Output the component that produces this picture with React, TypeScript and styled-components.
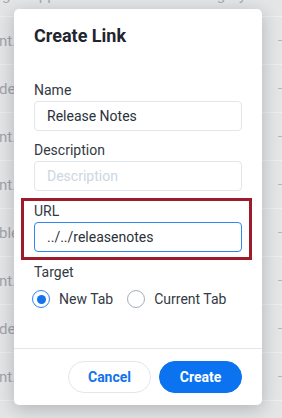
import React from "react";
import styled, { createGlobalStyle } from "styled-components";

const Global = createGlobalStyle`
  html, body { margin: 0; padding: 0; }
  body {
    width: 282px;
    height: 418px;
    overflow: hidden;
    background: #e3e5e7;
    font-family: Roboto, "Noto Sans", Arial, sans-serif;
  }
`;

const Page = styled.div`
  position: relative;
  width: 282px;
  height: 418px;
  overflow: hidden;
  background: #e3e5e7;
`;

const Table = styled.div`
  display: flex;
  flex-direction: column;
`;

const HeadRow = styled.div`
  height: 16px;
  border-bottom: 1px solid #eceef0;
  overflow: hidden;
  display: flex;
  justify-content: space-between;
  padding: 0 36px 0 2px;
  color: #a7a9ac;
  font-size: 15px;
  line-height: 16px;
`;

const HeadText = styled.span`
  margin-top: -13px;
  white-space: nowrap;
`;

const Row = styled.div`
  height: 47px;
  border-bottom: 1px solid #eceef0;
  display: flex;
  align-items: center;
  justify-content: space-between;
  color: #a2a4a7;
  font-size: 15px;
`;

const Cell = styled.span`
  white-space: nowrap;
  margin-left: -1px;
  margin-top: 0;
`;

const Dash = styled.span`
  width: 4px;
  height: 1px;
  background: #b4b6b9;
  margin-top: 0;
`;

const Modal = styled.div`
  position: absolute;
  left: 14px;
  top: 9px;
  width: 248px;
  height: 396px;
  background: #ffffff;
  border-radius: 5px;
  box-shadow: 0 4px 18px rgba(0, 0, 0, 0.22);
  display: flex;
  flex-direction: column;
`;

const Body = styled.div`
  flex: 1;
  padding: 15px 20px 0;
  display: flex;
  flex-direction: column;
`;

const Title = styled.h2`
  margin: 0 0 32px;
  font-size: 18px;
  line-height: 24px;
  font-weight: 700;
  color: #1f2630;
`;

const Field = styled.div`
  display: flex;
  flex-direction: column;
  margin-bottom: 9px;
`;

const Highlight = styled.div`
  margin: -2px -10px 2px -13px;
  padding: 0 7px 5px 10px;
  border: 3px solid #9c1c2b;
  display: flex;
  flex-direction: column;
`;

const Label = styled.label`
  font-size: 14px;
  line-height: 20px;
  color: #333a44;
`;

const Input = styled.input<{ $focus?: boolean }>`
  box-sizing: border-box;
  width: 208px;
  height: 30px;
  margin: 1px 0 0;
  padding: 0 12px;
  border: 1px solid ${(p) => (p.$focus ? "#2e86ee" : "#e1e6ec")};
  border-radius: 4px;
  font-family: Roboto, "Noto Sans", Arial, sans-serif;
  font-size: 14px;
  color: #2b313a;
  outline: none;
  background: #fff;
  &::placeholder {
    color: #cdd6e1;
  }
`;

const Radios = styled.div`
  display: flex;
  align-items: center;
  gap: 14px;
  margin-top: 8px;
  margin-left: -2px;
`;

const RadioItem = styled.div`
  display: flex;
  align-items: center;
  gap: 9px;
  font-size: 14px;
  color: #333a44;
`;

const Ring = styled.span<{ $on?: boolean }>`
  box-sizing: border-box;
  width: 18px;
  height: 18px;
  border-radius: 50%;
  border: 1px solid ${(p) => (p.$on ? "#2e86ee" : "#a4aebb")};
  display: flex;
  align-items: center;
  justify-content: center;
  &::after {
    content: "";
    width: 9px;
    height: 9px;
    border-radius: 50%;
    background: ${(p) => (p.$on ? "#1273eb" : "transparent")};
  }
`;

const Footer = styled.div`
  border-top: 1px solid #e4e6e9;
  padding: 12px 20px 12px;
  display: flex;
  justify-content: flex-end;
  gap: 8px;
`;

const Button = styled.button<{ $primary?: boolean }>`
  box-sizing: border-box;
  width: 83px;
  height: 32px;
  border-radius: 16px;
  border: 1px solid ${(p) => (p.$primary ? "#0b72f0" : "#e0e7ef")};
  background: ${(p) => (p.$primary ? "#0b72f0" : "#ffffff")};
  color: ${(p) => (p.$primary ? "#ffffff" : "#1273eb")};
  font-family: Roboto, "Noto Sans", Arial, sans-serif;
  font-size: 14px;
  font-weight: 700;
  cursor: pointer;
`;

const rows = ["nt.txt", "der", "nt.txt", "nt.img", "ble", "nt.txt", "der", "nt.txt"];

export default function App() {
  return (
    <>
      <Global />
      <Page>
        <Table>
          <HeadRow>
            <HeadText>g&nbsp;&nbsp;&nbsp;&nbsp;&nbsp;Applied</HeadText>
            <HeadText>Category</HeadText>
          </HeadRow>
          {rows.map((r, i) => (
            <Row key={i}>
              <Cell>{r}</Cell>
              <Dash />
            </Row>
          ))}
        </Table>
        <Modal>
          <Body>
            <Title>Create Link</Title>
            <Field>
              <Label>Name</Label>
              <Input defaultValue="Release Notes" />
            </Field>
            <Field>
              <Label>Description</Label>
              <Input placeholder="Description" />
            </Field>
            <Highlight>
              <Label>URL</Label>
              <Input $focus defaultValue="../../releasenotes" />
            </Highlight>
            <Label>Target</Label>
            <Radios>
              <RadioItem>
                <Ring $on />
                New Tab
              </RadioItem>
              <RadioItem>
                <Ring />
                Current Tab
              </RadioItem>
            </Radios>
          </Body>
          <Footer>
            <Button>Cancel</Button>
            <Button $primary>Create</Button>
          </Footer>
        </Modal>
      </Page>
    </>
  );
}
